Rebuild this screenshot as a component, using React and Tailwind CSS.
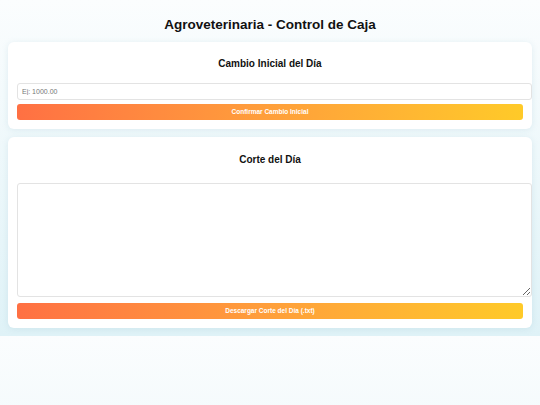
import React from 'react';

const font = { fontFamily: '"Liberation Sans", Arial, sans-serif' };

const GradientButton = ({ children }) => (
  <button className="w-[506px] h-[16px] rounded-[3px] bg-gradient-to-r from-[#ff7043] to-[#ffca28] text-white text-[6.5px] font-bold flex items-center justify-center">
    {children}
  </button>
);

const App = () => {
  return (
    <div
      className="min-h-[405px] w-full bg-[linear-gradient(180deg,#fbfdfe_0%,#dff2f7_100%)] bg-[length:100%_336px] bg-repeat-y text-[#111]"
      style={font}
    >
      <div className="px-2 pb-2">
        <h1 className="pt-[17px] h-[42px] text-center text-[13.5px] font-bold leading-[16px]">
          Agroveterinaria - Control de Caja
        </h1>

        {/* Cambio inicial */}
        <section className="bg-white rounded-[6px] shadow-[0_1px_6px_rgba(120,170,190,0.18)] pl-[9px] pt-[16px] pb-[9px] h-[87px]">
          <h2 className="text-center text-[10px] font-bold leading-[12px] pr-[9px]">Cambio Inicial del Día</h2>
          <input
            type="text"
            placeholder="Ej: 1000.00"
            className="mt-[13px] block w-[515px] h-[17px] border border-[#e3e3e3] rounded-[3px] px-[4px] text-[7px] placeholder:text-[#777] outline-none"
          />
          <div className="mt-[4px]">
            <GradientButton>Confirmar Cambio Inicial</GradientButton>
          </div>
        </section>

        {/* Corte del dia */}
        <section className="mt-[8px] bg-white rounded-[6px] shadow-[0_1px_6px_rgba(120,170,190,0.18)] pl-[9px] pt-[17px] pb-[9px] h-[191px]">
          <h2 className="text-center text-[10px] font-bold leading-[12px] pr-[9px]">Corte del Día</h2>
          <textarea className="mt-[17px] block w-[515px] h-[114px] border border-[#e3e3e3] rounded-[3px] p-[4px] text-[7px] outline-none" />
          <div className="mt-[6px]">
            <GradientButton>Descargar Corte del Día (.txt)</GradientButton>
          </div>
        </section>
      </div>
    </div>
  );
};

export default App;
